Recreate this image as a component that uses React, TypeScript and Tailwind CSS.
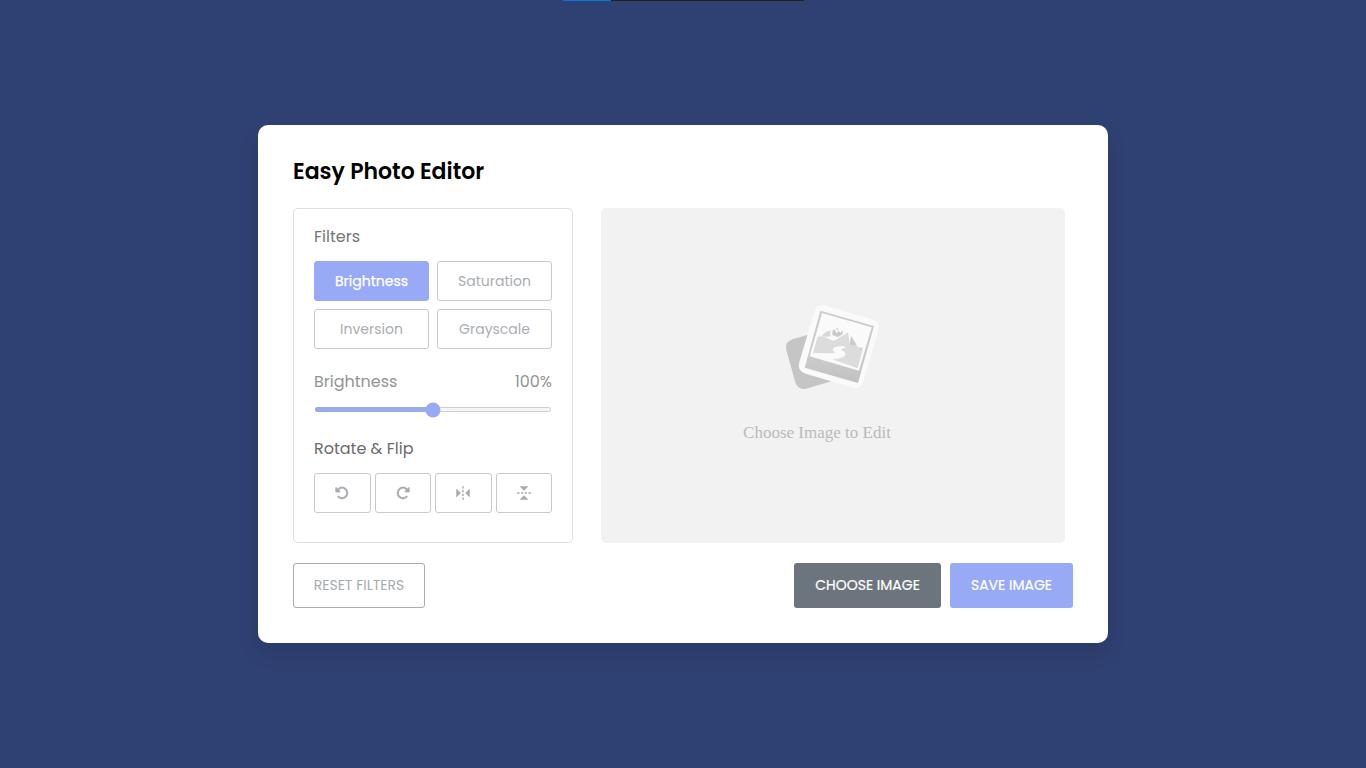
import { useState } from "react";
import type { ReactNode } from "react";
import { FaRotateLeft, FaRotateRight } from "react-icons/fa6";
import { BiReflectHorizontal, BiReflectVertical } from "react-icons/bi";

const filters = ["Brightness", "Saturation", "Inversion", "Grayscale"];

function IconButton({ label, children }: { label: string; children: ReactNode }) {
  return (
    <button aria-label={label} className="flex h-10 items-center justify-center rounded-[3px] border border-[#c9c9c9] pb-px text-[#a7acb1]">
      {children}
    </button>
  );
}

function PhotoIcon() {
  return (
    <svg width="100" height="100" viewBox="39 30 300 300" className="block">
      <defs>
        <linearGradient id="frame" x1="0" y1="0" x2="0" y2="1">
          <stop offset="0" stopColor="#cccccc" />
          <stop offset="0.7" stopColor="#cacaca" />
          <stop offset="1" stopColor="#c0c0c0" />
        </linearGradient>
      </defs>
      <path d="M112 135 70 147Q42 155 49 180L75 274Q83 300 106 297L184 274 150 160Z" fill="#c5c5c5" />
      <path d="M163 46 306 87Q332 95 325 121L279 277Q272 299 250 293L107 251Q80 243 88 216L134 63Q141 40 163 46Z" fill="#fafafa" />
      <path d="M151 62 312 108 264 279 104 233Z" fill="url(#frame)" />
      <path d="M156 69 305 112 267 242 119 199Z" fill="#fafafa" />
      <path d="M143 140 160 139 181 149Q193 155 202 147L234 127 239 160Q257 162 268 173L278 179 263 235 187 208Q222 205 226 195 228 184 212 181 216 177 228 172L218 168Q195 168 189 176 187 182 197 187L190 190 129 189Z" fill="#dcdcdc" />
      <path d="M156 137Q168 122 182 122L181 139Q169 142 156 137Z" fill="#d8d8d8" />
      <path d="M187 124 193 117 200 130 207 122 211 129 217 121 219 131 204 141 187 135Z" fill="#cacaca" />
      <path d="M198 114 206 117 202 122ZM243 138 260 165Q248 167 239 163ZM269 172 277 174 275 182Z" fill="#cacaca" />
    </svg>
  );
}

export default function App() {
  const [active, setActive] = useState("Brightness");
  const [value, setValue] = useState(100);
  return (
    <div className="relative flex h-screen items-center justify-center bg-[#2f4172] font-['Poppins','Inter',sans-serif]">
      <div className="absolute top-0 left-[563px] flex h-px w-[241px] bg-[#202020]">
        <div className="w-12 bg-[#0078d7]" />
      </div>
      <main className="h-[518px] w-[850px] rounded-[10px] bg-white px-[35px] pt-[30px] shadow-[0_10px_20px_rgba(0,0,0,0.1)]">
        <h2 className="h-[53px] text-[22px] leading-[33px] font-semibold text-black">Easy Photo Editor</h2>
        <div className="flex gap-7">
          <section className="h-[335px] w-[280px] rounded-[5px] border border-[#dfdfdf] px-5 pt-4">
            <h3 className="h-9 text-[16px] leading-6 text-[#757575]">Filters</h3>
            <div className="grid grid-cols-2 gap-2">
              {filters.map((name) => (
                <button
                  key={name}
                  onClick={() => setActive(name)}
                  className={`h-10 rounded-[3px] border text-[14px] ${active === name ? "border-[#98aaf6] bg-[#98aaf6] text-white [-webkit-text-stroke:0.25px_white]" : "border-[#c9c9c9] text-[#a9adb2]"}`}
                >
                  {name}
                </button>
              ))}
            </div>
            <div className="mt-[21px] flex h-6 justify-between text-[16px] leading-6 text-[#949494]">
              <span>{active}</span>
              <span>{value}%</span>
            </div>
            <input
              type="range"
              min="0"
              max="200"
              value={value}
              onChange={(e) => setValue(Number(e.target.value))}
              className="mt-[13px] block h-[5px] w-full accent-[#5372f0] opacity-60"
            />
            <h3 className="mt-[25px] h-9 text-[16px] leading-6 text-[#6c6c6c]">Rotate &amp; Flip</h3>
            <div className="grid grid-cols-4 gap-1">
              <IconButton label="Rotate left"><FaRotateLeft size={14} stroke="currentColor" strokeWidth={8} /></IconButton>
              <IconButton label="Rotate right"><FaRotateRight size={14} stroke="currentColor" strokeWidth={8} /></IconButton>
              <IconButton label="Flip horizontally"><BiReflectVertical size={18} /></IconButton>
              <IconButton label="Flip vertically"><BiReflectHorizontal size={18} /></IconButton>
            </div>
          </section>
          <section className="flex h-[335px] w-[464px] flex-col items-center rounded-[5px] bg-[#f2f2f2] pt-[92px]">
            <PhotoIcon />
            <p className="mt-[21px] -ml-8 font-['Liberation_Serif',serif] text-[17px] leading-6 text-[#bababa]">Choose Image to Edit</p>
          </section>
        </div>
        <div className="mt-5 flex h-[45px] text-[14px] [&>button]:pb-px">
          <button className="w-[132px] rounded-[3px] border border-[#a7acb1] text-[#a7acb1]">RESET FILTERS</button>
          <button className="mr-[9px] ml-auto w-[147px] rounded-[3px] bg-[#6c757d] text-white [-webkit-text-stroke:0.2px_white]">CHOOSE IMAGE</button>
          <button className="w-[123px] rounded-[3px] bg-[#98aaf6] text-white [-webkit-text-stroke:0.2px_white]">SAVE IMAGE</button>
        </div>
      </main>
    </div>
  );
}
